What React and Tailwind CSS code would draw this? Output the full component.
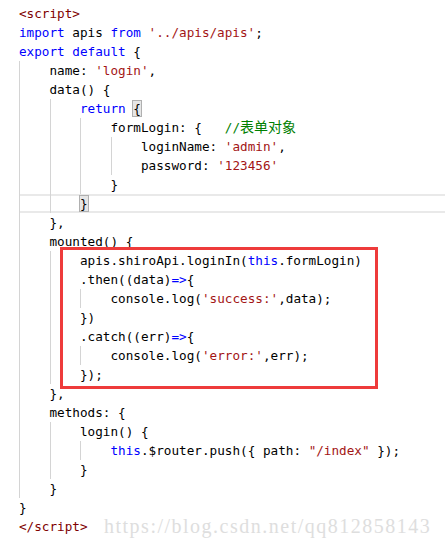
import React from "react";

const KW = "text-[#0000ff]";
const STR = "text-[#a31515]";
const CMT = "text-[#008000]";
const TAG = "text-[#800000]";

const lines = [
  { l: 0, t: [["<script>", TAG]] },
  { l: 0, t: [["import", KW], [" apis "], ["from", KW], [" "], ["'../apis/apis'", STR], [";"]] },
  { l: 0, t: [["export", KW], [" "], ["default", KW], [" {"]] },
  { l: 1, t: [["name: "], ["'login'", STR], [","]] },
  { l: 1, t: [["data() {"]] },
  { l: 2, t: [["return", KW], [" "], ["{", "box"]] },
  { l: 3, t: [["formLogin: {   "], ["//", CMT], ["表单对象", "cjk"]] },
  { l: 4, t: [["loginName: "], ["'admin'", STR], [","]] },
  { l: 4, t: [["password: "], ["'123456'", STR]] },
  { l: 3, t: [["}"]] },
  { l: 2, t: [["}", "box"]], hl: true },
  { l: 1, t: [["},"]] },
  { l: 1, t: [["mounted() {"]] },
  { l: 2, t: [["apis.shiroApi.loginIn("], ["this", KW], [".formLogin)"]] },
  { l: 2, t: [[".then((data)"], ["=>", KW], ["{"]] },
  { l: 3, t: [["console.log("], ["'success:'", STR], [",data);"]] },
  { l: 2, t: [["})"]] },
  { l: 2, t: [[".catch((err)"], ["=>", KW], ["{"]] },
  { l: 3, t: [["console.log("], ["'error:'", STR], [",err);"]] },
  { l: 2, t: [["});"]] },
  { l: 1, t: [["},"]] },
  { l: 1, t: [["methods: {"]] },
  { l: 2, t: [["login() {"]] },
  { l: 3, t: [["this", KW], [".$router.push({ path: "], ['"/index"', STR], [" });"]] },
  { l: 2, t: [["}"]] },
  { l: 1, t: [["}"]] },
  { l: 0, t: [["}"]] },
  { l: 0, t: [["</script>", TAG]] },
];

function Token({ text, cls }) {
  if (cls === "box") {
    return (
      <span className="inline-flex h-[15px] items-center bg-[#e6e6e6] outline outline-1 outline-[#b0b0b0]">
        {text}
      </span>
    );
  }
  if (cls === "cjk") {
    return (
      <span className={`${CMT} text-[14px]`} style={{ fontFamily: '"Noto Sans CJK SC", sans-serif' }}>
        {text}
      </span>
    );
  }
  return <span className={cls || ""}>{text}</span>;
}

export default function App() {
  return (
    <div className="relative h-[549px] w-[445px] overflow-hidden bg-white">
      <div
        className="flex flex-col pt-[3.5px] pl-[19px] text-[12.67px] text-black whitespace-pre"
        style={{ fontFamily: '"DejaVu Sans Mono", "Liberation Mono", monospace' }}
      >
        {lines.map((ln, i) => (
          <div
            key={i}
            className={`flex h-[19px] items-center ${ln.hl ? "border-y-2 border-[#e9e9e9]" : ""}`}
          >
            {Array.from({ length: ln.l }).map((_, k) => (
              <span key={k} className="h-[19px] w-[30.5px] shrink-0 border-l border-[#d4d4d4]" />
            ))}
            <span className="leading-[19px]">
              {ln.t.map((tk, j) => (
                <Token key={j} text={tk[0]} cls={tk[1]} />
              ))}
            </span>
          </div>
        ))}
      </div>

      <div className="pointer-events-none absolute left-[60px] top-[247px] h-[142px] w-[318px] border-[3px] border-[#ee3b3b]" />

      <div
        className="pointer-events-none absolute left-[104px] top-[514px] text-[20px] leading-[24px] tracking-[1.5px] text-[#dedede]"
        style={{ fontFamily: '"Liberation Serif", serif' }}
      >
        https://blog.csdn.net/qq812858143
      </div>
    </div>
  );
}
